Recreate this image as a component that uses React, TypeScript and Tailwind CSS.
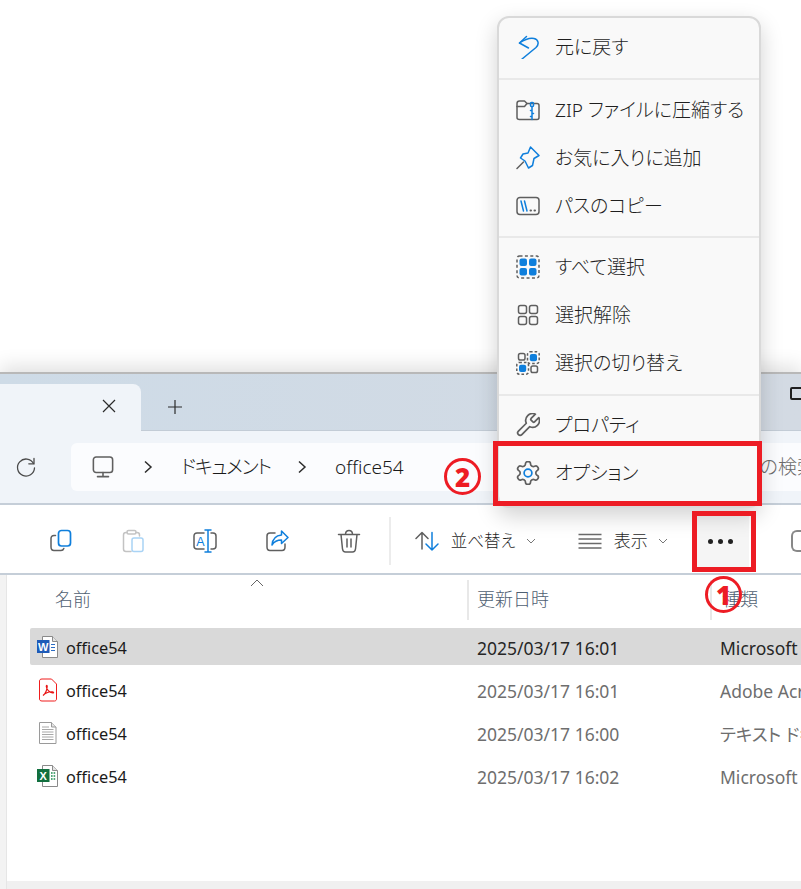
import React from "react";

const GRAY = "#5f5f5f";
const BLUE = "#0f7fdc";

const Icon: React.FC<{ size?: number; viewBox?: string; children: React.ReactNode }> = ({ size = 24, viewBox = "0 0 24 24", children }) => (
  <svg width={size} height={size} viewBox={viewBox} fill="none" strokeWidth={1.5} strokeLinecap="round" strokeLinejoin="round">
    {children}
  </svg>
);

// menu icons
const UndoIcon = () => (
  <Icon>
    <path d="M10.5 1.5L3.5 8L12.5 13" stroke={BLUE} />
    <path d="M3.5 8C8 5 13 2.5 18 3.5C22.5 4.5 23.5 9 20 12.5L6 24" stroke={BLUE} />
  </Icon>
);
const ZipIcon = () => (
  <Icon>
    <path d="M1 5.5C1 4 2 3 3.5 3H8.5L11 5.5H21C22.2 5.5 23 6.3 23 7.5V19.5C23 20.9 22.2 21.5 21 21.5H3.5C2 21.5 1 20.7 1 19.5V5.5Z" stroke={GRAY} />
    <path d="M1 8.5H8.5L11 5.5" stroke={GRAY} />
    <rect x="14.5" y="4.5" width="3" height="4" rx="1" stroke={BLUE} />
    <path d="M16 8.5V21.5M14.5 12.5H16M16 15.5H17.5M14.5 18.5H16" stroke={BLUE} />
  </Icon>
);
const PinIcon = () => (
  <Icon>
    <path d="M14.5 1L23 9.5L18 12.5L16.5 19.5L12.5 22L9 15L4.5 12L7 8L12 7L14.5 1Z" stroke={BLUE} />
    <path d="M7.5 16L1 22.5" stroke={GRAY} />
  </Icon>
);
const PathIcon = () => (
  <Icon>
    <rect x="1" y="3.5" width="22" height="17" rx="3" stroke={GRAY} />
    <path d="M5 7L7.5 17M8.5 7L11 17" stroke={BLUE} />
    <path d="M14.5 16.6H15M18.5 16.6H19" stroke={GRAY} strokeWidth={2} />
  </Icon>
);
const SelectAllIcon = () => (
  <Icon>
    <rect x="1" y="1" width="22" height="22" rx="2.5" stroke={GRAY} strokeDasharray="3 2.4" strokeLinecap="butt" />
    <rect x="3.5" y="3.5" width="7.5" height="7.5" rx="2" fill={BLUE} />
    <rect x="13" y="3.5" width="7.5" height="7.5" rx="2" fill={BLUE} />
    <rect x="3.5" y="13" width="7.5" height="7.5" rx="2" fill={BLUE} />
    <rect x="13" y="13" width="7.5" height="7.5" rx="2" fill={BLUE} />
  </Icon>
);
const ClearIcon = () => (
  <Icon>
    <rect x="2.5" y="2.5" width="8" height="8" rx="2" stroke={GRAY} />
    <rect x="13.5" y="2.5" width="8" height="8" rx="2" stroke={GRAY} />
    <rect x="2.5" y="13.5" width="8" height="8" rx="2" stroke={GRAY} />
    <rect x="13.5" y="13.5" width="8" height="8" rx="2" stroke={GRAY} />
  </Icon>
);
const InvertIcon = () => (
  <Icon>
    <rect x="2.5" y="2.5" width="6.5" height="6.5" rx="1.8" stroke={GRAY} />
    <rect x="15" y="15" width="6.5" height="6.5" rx="1.8" stroke={GRAY} />
    <rect x="11.5" y="0.8" width="11.7" height="11.7" rx="2.5" stroke={GRAY} strokeDasharray="2.6 2" strokeLinecap="butt" />
    <rect x="0.8" y="11.5" width="11.7" height="11.7" rx="2.5" stroke={GRAY} strokeDasharray="2.6 2" strokeLinecap="butt" />
    <rect x="13.8" y="3" width="7.2" height="7.2" rx="2" fill={BLUE} />
    <rect x="3" y="13.8" width="7.2" height="7.2" rx="2" fill={BLUE} />
  </Icon>
);
const WrenchIcon = () => (
  <Icon viewBox="1.5 1.5 21 21">
    <path d="M14.7 6.3a1 1 0 0 0 0 1.4l1.6 1.6a1 1 0 0 0 1.4 0l3.77-3.77a6 6 0 0 1-7.94 7.94l-6.91 6.91a2.12 2.12 0 0 1-3-3l6.91-6.91a6 6 0 0 1 7.94-7.94l-3.76 3.76z" stroke={GRAY} />
  </Icon>
);
const GearIcon = () => (
  <Icon viewBox="1.5 1.5 21 21">
    <path d="M12.22 2h-.44a2 2 0 0 0-2 2v.18a2 2 0 0 1-1 1.73l-.43.25a2 2 0 0 1-2 0l-.15-.08a2 2 0 0 0-2.73.73l-.22.38a2 2 0 0 0 .73 2.73l.15.1a2 2 0 0 1 1 1.72v.51a2 2 0 0 1-1 1.74l-.15.09a2 2 0 0 0-.73 2.73l.22.38a2 2 0 0 0 2.73.73l.15-.08a2 2 0 0 1 2 0l.43.25a2 2 0 0 1 1 1.73V20a2 2 0 0 0 2 2h.44a2 2 0 0 0 2-2v-.18a2 2 0 0 1 1-1.73l.43-.25a2 2 0 0 1 2 0l.15.08a2 2 0 0 0 2.73-.73l.22-.39a2 2 0 0 0-.73-2.73l-.15-.08a2 2 0 0 1-1-1.74v-.5a2 2 0 0 1 1-1.74l.15-.09a2 2 0 0 0 .73-2.73l-.22-.38a2 2 0 0 0-2.73-.73l-.15.08a2 2 0 0 1-2 0l-.43-.25a2 2 0 0 1-1-1.73V4a2 2 0 0 0-2-2z" stroke={GRAY} />
    <circle cx="12" cy="12" r="3.4" stroke={BLUE} />
  </Icon>
);

// toolbar icons
const CopyIcon = () => (
  <Icon>
    <rect x="9.5" y="1.5" width="12" height="15.5" rx="3" stroke={BLUE} strokeWidth={1.7} />
    <path d="M6.5 6.5H5C3.2 6.5 2 7.7 2 9.5V18C2 20 3.2 21.5 5 21.5H12C13.6 21.5 14.5 20.4 14.8 19.5" stroke={GRAY} />
  </Icon>
);
const PasteIcon = () => (
  <Icon>
    <path d="M6 3.5H5C3.5 3.5 2.5 4.5 2.5 6V20C2.5 21.5 3.5 22.5 5 22.5H10M15 3.5H16C17.5 3.5 18.5 4.5 18.5 6V7" stroke="#c3c3c3" />
    <rect x="6" y="1.5" width="9" height="3.5" rx="1.5" stroke="#c3c3c3" />
    <rect x="11" y="9" width="11" height="13.5" rx="2" stroke="#a9d3f5" />
  </Icon>
);
const RenameIcon = () => (
  <Icon>
    <path d="M11 4H4C2.2 4 1 5.2 1 7V17C1 18.8 2.2 20 4 20H11M18 4H20C21.8 4 23 5.2 23 7V17C23 18.8 21.8 20 20 20H18" stroke={GRAY} />
    <path d="M12 1H18M15 1V23M12 23H18" stroke={BLUE} />
    <text x="7.4" y="16.5" textAnchor="middle" fontSize="12.5" fill={BLUE} fontFamily="Liberation Sans">
      A
    </text>
  </Icon>
);
const ShareIcon = () => (
  <Icon>
    <path d="M10 4H5C3 4 2 5.2 2 7V18C2 20 3 21.5 5 21.5H17C19 21.5 20 20 20 18V15" stroke={GRAY} />
    <path d="M16.5 2L23 8.5L16.5 14.5V11C12.5 11 9.5 12 7 16C7.5 10.5 11 6.5 16.5 6V2Z" stroke={BLUE} />
  </Icon>
);
const TrashIcon = () => (
  <Icon>
    <path d="M1.5 5.5H22.5M4 5.5L5.5 20C5.7 21.8 6.8 23 8.5 23H15.5C17.2 23 18.3 21.8 18.5 20L20 5.5M8.5 5C8.7 3 10 1.5 12 1.5C14 1.5 15.3 3 15.5 5M10 10V18M14 10V18" stroke={GRAY} />
  </Icon>
);
const SortIcon = () => (
  <Icon>
    <path d="M7 3.5V20M1 9.5L7 3.5L13 9.5" stroke={GRAY} />
    <path d="M17 3.5V21M11 15L17 21L23 15" stroke={BLUE} />
  </Icon>
);
const ViewIcon = () => (
  <Icon>
    <path d="M0.5 5.5H23.5M0.5 10H23.5M0.5 14.5H23.5M0.5 19H23.5" stroke="#6a6a6a" strokeLinecap="butt" />
  </Icon>
);
const SmallChevron = () => (
  <svg width="10" height="6" viewBox="0 0 10 6" fill="none" stroke="#777" strokeWidth="1">
    <path d="M1 1L5 5L9 1" />
  </svg>
);
const PathChevron = () => (
  <svg width="10" height="14" viewBox="0 0 10 14" fill="none" stroke="#2b2b2b" strokeWidth="1.5">
    <path d="M2 1.5L8 7L2 12.5" />
  </svg>
);

// file icons
const FileOutline = () => (
  <>
    <path d="M5.5 1.5H15.5L20.5 6.5V22.5H5.5Z" fill="white" stroke="#8a8a8a" />
    <path d="M15.5 1.5V6.5H20.5" fill="#e4e4e4" stroke="#8a8a8a" />
  </>
);
const WordIcon = () => (
  <svg width="21" height="24" viewBox="0 0 21 24" fill="none">
    <FileOutline />
    <path d="M14 9.5H18M14 12.5H18M14 15.5H18" stroke="#2b6cc4" />
    <rect x="0" y="5" width="12.5" height="13" fill="#1e5bb8" />
    <text x="6.2" y="15.5" textAnchor="middle" fontSize="11" fontWeight="700" fill="white" fontFamily="Liberation Sans">
      W
    </text>
  </svg>
);
const PdfIcon = () => (
  <svg width="21" height="24" viewBox="0 0 21 24" fill="none">
    <path d="M5 1H14.5L19.5 6V21C19.5 22.2 18.7 23 17.5 23H5C3.3 23 2.5 22.2 2.5 21V3C2.5 1.8 3.3 1 5 1Z" fill="white" stroke="#f01d1d" />
    <path d="M6 17.5C8.5 15.5 10 12 10.2 8.5C10.3 7 9.2 7 9.3 8.5C9.5 11.5 12.5 14.5 15.5 15C17 15.2 17 14 15.5 13.8C12 13.5 8.5 15 6 17.5Z" stroke="#e81515" strokeWidth="1.2" />
  </svg>
);
const TextIcon = () => (
  <svg width="21" height="24" viewBox="0 0 21 24" fill="none">
    <path d="M2.5 1.5H14.5L19 6V22.5H2.5Z" fill="white" stroke="#9a9a9a" />
    <path d="M14.5 1.5V6H19" fill="#e4e4e4" stroke="#9a9a9a" />
    <path d="M5 6H12M5 8.5H16.5M5 11H16.5M5 13.5H16.5M5 16H16.5M5 18.5H16.5" stroke="#a8a8a8" />
  </svg>
);
const ExcelIcon = () => (
  <svg width="21" height="24" viewBox="0 0 21 24" fill="none">
    <FileOutline />
    <path d="M14 9H15.6M16.6 9H18.2M14 12H15.6M16.6 12H18.2M14 15H15.6M16.6 15H18.2" stroke="#1c8a50" strokeWidth="1.6" />
    <rect x="0" y="5" width="12.5" height="13" fill="#12703f" />
    <text x="6.2" y="15.5" textAnchor="middle" fontSize="11" fontWeight="700" fill="white" fontFamily="Liberation Sans">
      X
    </text>
  </svg>
);

const MenuItem: React.FC<{ icon: React.ReactNode; label: string }> = ({ icon, label }) => (
  <div className="flex h-12 items-center gap-[15px] pl-[17px]">
    {icon}
    <span className="whitespace-nowrap text-[19px] font-light text-[#1f1f1f]">{label}</span>
  </div>
);

const Separator = () => <div className="h-[2px] bg-[#e9e9e9]" />;

const ContextMenu = () => (
  <div className="absolute left-[497px] top-4 h-[492px] w-[264px] rounded-xl border-2 border-[#d9d9d9] bg-[#f9f9f9] shadow-[0_8px_22px_rgba(0,0,0,0.18)]">
    <div className="pb-[7px] pt-[5px]">
      <MenuItem icon={<UndoIcon />} label="元に戻す" />
    </div>
    <Separator />
    <div className="pb-[6px] pt-[6px]">
      <MenuItem icon={<ZipIcon />} label="ZIP ファイルに圧縮する" />
      <MenuItem icon={<PinIcon />} label="お気に入りに追加" />
      <MenuItem icon={<PathIcon />} label="パスのコピー" />
    </div>
    <Separator />
    <div className="pb-[7px] pt-[5px]">
      <MenuItem icon={<SelectAllIcon />} label="すべて選択" />
      <MenuItem icon={<ClearIcon />} label="選択解除" />
      <MenuItem icon={<InvertIcon />} label="選択の切り替え" />
    </div>
    <Separator />
    <div className="pt-[5px]">
      <MenuItem icon={<WrenchIcon />} label="プロパティ" />
      <MenuItem icon={<GearIcon />} label="オプション" />
    </div>
  </div>
);

const Callout: React.FC<{ n: string; className: string }> = ({ n, className }) => (
  <div className={`absolute flex h-[37px] w-[37px] items-center justify-center rounded-full border-[3px] border-[#ed1c24] text-[26px] font-black leading-none text-[#ed1c24] ${className}`}>
    {n}
  </div>
);

const files = [
  { icon: <WordIcon />, date: "2025/03/17 16:01", type: "Microsoft Word 文書", selected: true },
  { icon: <PdfIcon />, date: "2025/03/17 16:01", type: "Adobe Acrobat 文書", selected: false },
  { icon: <TextIcon />, date: "2025/03/17 16:00", type: "テキスト ドキュメント", selected: false },
  { icon: <ExcelIcon />, date: "2025/03/17 16:02", type: "Microsoft Excel ワークシート", selected: false },
];

export default function App() {
  return (
    <div className="relative flex h-[889px] w-[801px] flex-col overflow-hidden bg-white font-['Noto_Sans','Noto_Sans_CJK_JP',sans-serif] [font-feature-settings:'palt']">
      <div className="h-[372px] shrink-0" />

      <div className="flex min-h-0 flex-1 flex-col border-t-2 border-[#b8b8b8] shadow-[0_-6px_18px_rgba(0,0,0,0.12)]">
        {/* tab bar */}
        <div className="flex h-[57px] shrink-0 items-end border-b border-[#c3ccd6] bg-linear-to-r from-[#cedbe7] to-[#d3dae3]">
          <div className="-mb-px flex h-[47px] w-[141px] items-start justify-end rounded-tr-lg bg-[#f0f4f9] pr-[23px] pt-[13px]">
            <svg width="18" height="18" viewBox="0 0 18 18" fill="none" stroke="#2b2b2b" strokeWidth="1.2">
              <path d="M3 3L15 15M15 3L3 15" />
            </svg>
          </div>
          <div className="mb-[14px] ml-[25px]">
            <svg width="18" height="18" viewBox="0 0 18 18" fill="none" stroke="#2b2b2b" strokeWidth="1.2">
              <path d="M9 2V16M2 9H16" />
            </svg>
          </div>
          <div className="flex-1" />
          <div className="mb-[30px] mr-[-7px] h-[13px] w-[18px] rounded-[2px] border-2 border-[#1f1f1f]" />
        </div>

        {/* address row */}
        <div className="flex h-[74px] shrink-0 items-center border-b-2 border-[#c5ced8] bg-[#f0f4f9]">
          <div className="flex w-[71px] justify-start pl-[15px]">
            <svg width="22" height="22" viewBox="0 0 22 22" fill="none" stroke="#4a4a4a" strokeWidth="1.3" strokeLinecap="round">
              <path d="M18.5 7.5A8.5 8.5 0 1 0 19.5 12" />
              <path d="M19 2.5V7.8H13.8" />
            </svg>
          </div>
          <div className="flex h-12 w-[600px] shrink-0 items-center rounded-md bg-[#fbfcfe] text-[19px] font-light text-[#1a1a1a]">
            <div className="ml-[21px]">
              <svg width="22" height="22" viewBox="0 0 24 24" fill="none" stroke={GRAY} strokeWidth="1.7" strokeLinecap="round">
                <rect x="1.5" y="1" width="21" height="17" rx="3" />
                <path d="M12 18V22M6 22.5H18" />
              </svg>
            </div>
            <div className="ml-[29px]"><PathChevron /></div>
            <span className="ml-[28px] w-[90px] whitespace-nowrap tracking-[-1.2px]">ドキュメント</span>
            <div className="ml-[26px]"><PathChevron /></div>
            <span className="ml-[28px]">office54</span>
          </div>
          <div className="ml-[8px] flex h-12 flex-1 items-center overflow-hidden whitespace-nowrap rounded-l-md bg-[#fbfcfe] pl-[12px] text-[19px] font-light text-[#6b6b6b]">
            office54の検索
          </div>
        </div>

        {/* toolbar */}
        <div className="flex h-[70px] shrink-0 items-center whitespace-nowrap border-b-2 border-[#c5ced8] bg-white pl-[49px] pt-1 text-[#1f1f1f]">
          <div className="flex gap-12">
            <CopyIcon />
            <PasteIcon />
            <RenameIcon />
            <ShareIcon />
            <TrashIcon />
          </div>
          <div className="ml-[28px] h-12 w-[2px] bg-[#ececec]" />
          <div className="ml-[24px] flex items-center">
            <SortIcon />
            <span className="ml-[12px] w-[65px] text-[16.5px] font-light">並べ替え</span>
            <span className="ml-[10px]"><SmallChevron /></span>
          </div>
          <div className="ml-[42px] flex items-center">
            <ViewIcon />
            <span className="ml-[12px] w-[35px] text-[17px] font-light">表示</span>
            <span className="ml-[9px]"><SmallChevron /></span>
          </div>
          <div className="ml-[25px] flex h-[60px] w-16 items-center justify-center gap-[5px] bg-[#f5f5f5]">
            <span className="h-[5px] w-[5px] rounded-full bg-[#222]" />
            <span className="h-[5px] w-[5px] rounded-full bg-[#222]" />
            <span className="h-[5px] w-[5px] rounded-full bg-[#222]" />
          </div>
          <div className="ml-[42px] h-[22px] w-[10px] shrink-0 rounded-l-md border-2 border-r-0 border-[#888]" />
        </div>

        {/* file list */}
        <div className="flex min-h-0 flex-1">
          <div className="w-[7px] shrink-0 border-r border-[#e6e6e6] bg-[#f3f3f3]" />
          <div className="flex min-w-0 flex-1 flex-col">
            <div className="relative flex h-[49px] shrink-0 items-center text-[18px] font-light text-[#4f6072]">
              <svg className="absolute left-[243px] top-[4px]" width="14" height="8" viewBox="0 0 14 8" fill="none" stroke="#666" strokeWidth="1">
                <path d="M1 7L7 1L13 7" />
              </svg>
              <div className="w-[460px] pl-[48px]">名前</div>
              <div className="flex h-[40px] w-[243px] items-center border-l-2 border-[#e8e8e8] pl-[8px]">更新日時</div>
              <div className="flex h-[40px] items-center border-l-2 border-[#e8e8e8] pl-[10px]">種類</div>
            </div>
            <div className="mt-[4px] flex flex-col gap-[6px] pl-[23px]">
              {files.map((file, i) => (
                <div key={i} className={`flex h-[37px] items-center whitespace-nowrap pt-1 text-[17.5px] ${file.selected ? "rounded-l-[2px] bg-[#d9d9d9] text-[#262626]" : "text-[#6e6e6e]"}`}>
                  <div className="ml-[7px] flex w-[29px] shrink-0 -translate-y-[2px]">{file.icon}</div>
                  <span className="w-[411px] shrink-0 text-[16.3px] text-[#1a1a1a]">office54</span>
                  <span className="w-[243px] shrink-0">{file.date}</span>
                  <span>{file.type}</span>
                </div>
              ))}
            </div>
            <div className="flex-1" />
            <div className="h-2 shrink-0 bg-[#f0f0f0]" />
          </div>
        </div>
      </div>

      <ContextMenu />

      {/* red annotations */}
      <div className="absolute left-[493px] top-[441px] h-[65px] w-[269px] border-[5px] border-[#ed1c24]" />
      <div className="absolute left-[692px] top-[511px] h-[61px] w-16 border-[5px] border-[#ed1c24]" />
      <Callout n="2" className="left-[444px] top-[458px]" />
      <Callout n="1" className="left-[705px] top-[576px]" />
    </div>
  );
}
